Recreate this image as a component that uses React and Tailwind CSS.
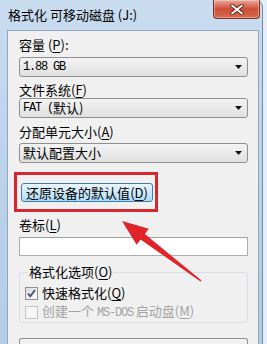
import React from "react";

const cjk = "font-['Noto_Sans_CJK_SC','Noto_Sans',sans-serif]";
const mono = "font-['Liberation_Mono',monospace] text-[12px] tracking-[-1.2px]";

const Key = ({ k }) => (
  <span>
    (<span className="underline underline-offset-2">{k}</span>)
  </span>
);

const Label = ({ text, k, colon, className = "" }) => (
  <div className={`h-[16px] text-[13px] leading-[16px] text-black ${className}`}>
    {text}
    <Key k={k} />
    {colon && ":"}
  </div>
);

const Combo = ({ children, className = "" }) => (
  <div
    className={`flex h-[20px] w-[229px] items-center justify-between rounded-[3px] border border-[#8e8f8f] bg-gradient-to-b from-[#f3f3f3] to-[#e0e0e0] pl-[3px] pr-[5px] text-[13px] leading-[16px] ${className}`}
  >
    <span className="flex items-center">{children}</span>
    <svg width="7" height="4" viewBox="0 0 7 4">
      <path d="M0 0h7L3.5 4z" fill="#111" />
    </svg>
  </div>
);

const Check = ({ checked, disabled, children }) => (
  <div className="flex h-[16px] items-center">
    <div
      className={`flex h-[13px] w-[13px] items-center justify-center border ${
        disabled
          ? "border-[#c4c4c4] bg-[#f6f6f6]"
          : "border-[#8f8f8f] bg-gradient-to-br from-[#dcdcdc] to-[#fbfbfb]"
      }`}
    >
      {checked && (
        <svg width="9" height="9" viewBox="0 0 9 9">
          <path d="M1 4.5l2.3 2.8L8 1" stroke="#3c4d74" strokeWidth="1.8" fill="none" />
        </svg>
      )}
    </div>
    <span
      className={`ml-[4px] text-[13px] leading-[16px] ${
        disabled ? "text-[#a3a3a3]" : "text-black"
      }`}
    >
      {children}
    </span>
  </div>
);

export default function App() {
  return (
    <div className={`relative h-[344px] w-[267px] overflow-hidden bg-[#e7eef6] ${cjk}`}>
      <div className="flex h-full w-[263px] flex-col rounded-tr-[7px] border-r border-[#6f89a8] bg-gradient-to-b from-[#c9dcf0] via-[#bcd2ea] to-[#b4cce6]">
        {/* title bar */}
        <div className="relative flex h-[30px] shrink-0 items-center pl-[8px]">
          <span className="text-[13px] leading-[16px] text-black">格式化 可移动磁盘 (J:)</span>
          <div className="absolute right-[2px] top-0 flex h-[19px] w-[47px] items-center justify-center rounded-b-[4px] border border-t-0 border-[#7a2f22] bg-gradient-to-b from-[#e9a89a] via-[#cf4e34] to-[#d66a4f] shadow-[inset_0_0_0_1px_rgba(255,255,255,0.35)]">
            <svg width="14" height="11" viewBox="0 0 14 11">
              <path d="M2 1.5l10 8M12 1.5l-10 8" stroke="#5a1e14" strokeWidth="3.6" strokeLinecap="round" />
              <path d="M2 1.5l10 8M12 1.5l-10 8" stroke="#fff" strokeWidth="2" strokeLinecap="round" />
            </svg>
          </div>
        </div>

        {/* panel */}
        <div className="ml-[7px] mr-[3px] flex flex-1 flex-col border border-b-0 border-[#93a6be] bg-[#f0f0f0] pl-[11px] pr-[10px]">
          <Label text="容量 " k="P" colon className="mt-[6px]" />
          <Combo className="mt-[4px]">
            <span className={mono}>1.88 GB</span>
          </Combo>

          <Label text="文件系统" k="F" className="mt-[5px]" />
          <Combo>
            <span className={mono}>FAT (</span>
            <span>默认)</span>
          </Combo>

          <Label text="分配单元大小" k="A" className="mt-[6px]" />
          <Combo className="mt-[3px]">默认配置大小</Combo>

          <div className="-ml-[5px] mt-[9px] h-[40px] w-[144px] border-[3px] border-[#d8262c] pl-[4px] pt-[8px]">
            <div className="flex h-[19px] w-[132px] items-center justify-center rounded-[3px] border border-[#3c7fb1] bg-gradient-to-b from-[#ebf6fd] via-[#cfeafc] to-[#a9daf6] text-[13px] leading-[16px] text-black">
              还原设备的默认值
              <Key k="D" />
            </div>
          </div>

          <Label text="卷标" k="L" className="mt-[5px]" />
          <div className="mt-[4px] h-[19px] w-[229px] border border-[#abadb3] border-t-[#9da0a6] bg-white" />

          <fieldset className="mt-[8px] w-[229px] rounded-[3px] border border-[#d5dfe5] pb-[2px] pl-[5px]">
            <legend className="ml-[3px] px-[1px] text-[13px] leading-[16px] text-black">
              格式化选项
              <Key k="O" />
            </legend>
            <div className="mt-[5px]">
              <Check checked>
                快速格式化
                <Key k="Q" />
              </Check>
            </div>
            <div className="mt-[3px]">
              <Check disabled>
                创建一个 <span className={mono}>MS-DOS</span> 启动盘
                <Key k="M" />
              </Check>
            </div>
          </fieldset>

          <div className="mt-[15px] h-[20px] w-[229px] shrink-0 rounded-t-[3px] border border-b-0 border-[#8e8f8f] bg-gradient-to-b from-[#f3f3f3] to-[#e6e6e6]" />
        </div>
      </div>

      {/* annotation arrow */}
      <svg className="pointer-events-none absolute left-0 top-0" width="267" height="344" viewBox="0 0 267 344">
        <polygon
          points="122,221 148.8,228.7 144.8,233.9 201.5,280.4 200.5,281.6 140.6,239.5 136.6,244.7"
          fill="#e0242a"
        />
      </svg>
    </div>
  );
}
